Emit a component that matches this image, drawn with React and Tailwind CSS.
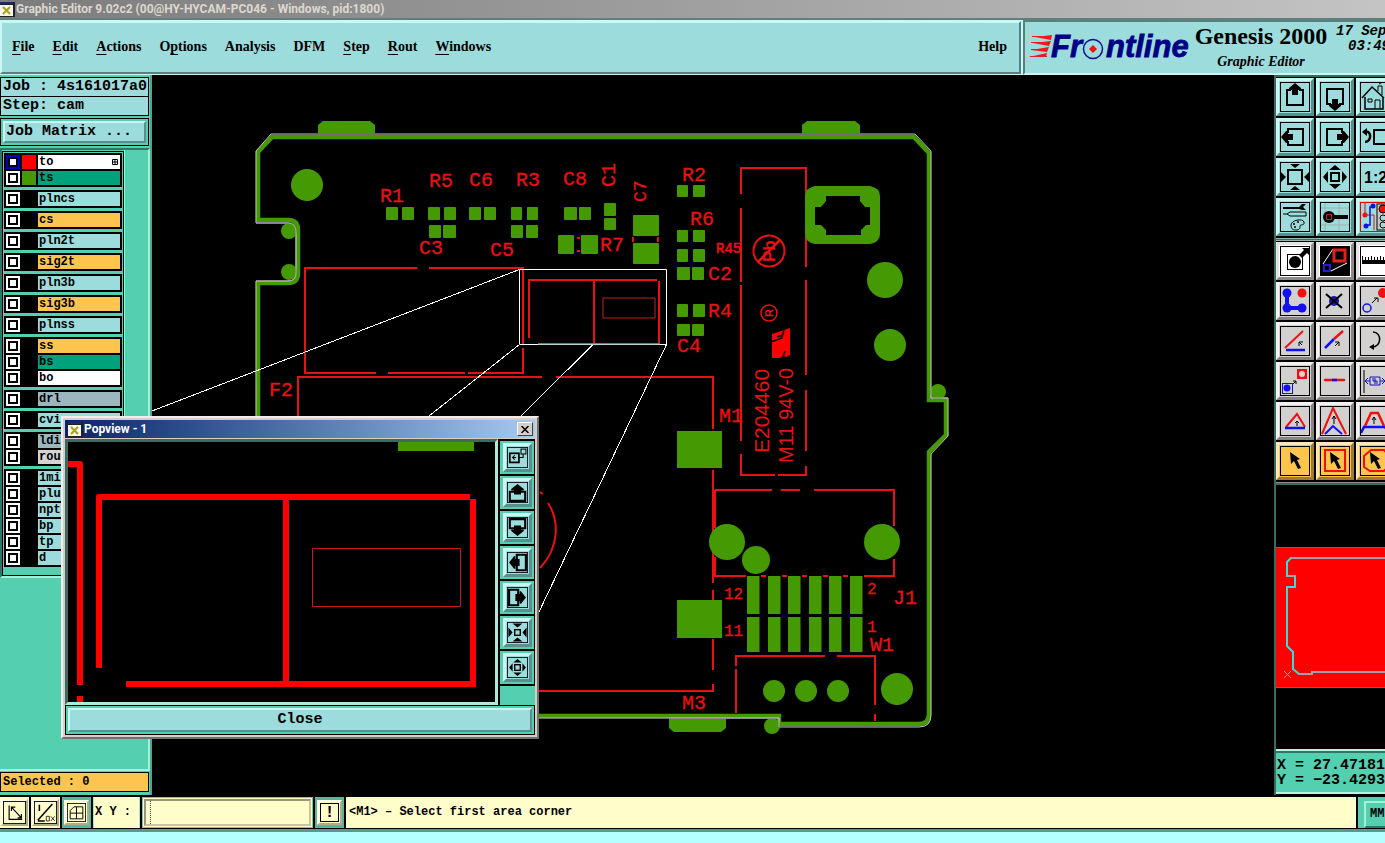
import React from "react";

const MONO = "font-['Liberation_Mono',monospace]";
const SERIF = "font-['Liberation_Serif',serif]";
const SANS = "font-['Roboto',sans-serif]";

const MENU = [
  ["", "F", "ile"],
  ["", "E", "dit"],
  ["", "A", "ctions"],
  ["O", "p", "tions"],
  ["Analysis", "", ""],
  ["DFM", "", ""],
  ["", "S", "tep"],
  ["", "R", "out"],
  ["", "W", "indows"],
];

const CYAN = "bg-[#9cdcdc]";
const ORANGE = "bg-[#fec54e]";
const GREEN = "bg-[#00a27c]";
const SLATE = "bg-[#9cb6be]";
const WHITE = "bg-white";

const LAYERS = [
  [["to", WHITE], ["ts", GREEN]],
  [["plncs", CYAN]],
  [["cs", ORANGE]],
  [["pln2t", CYAN]],
  [["sig2t", ORANGE]],
  [["pln3b", CYAN]],
  [["sig3b", ORANGE]],
  [["plnss", CYAN]],
  [["ss", ORANGE], ["bs", GREEN], ["bo", WHITE]],
  [["drl", SLATE]],
  [["cvi", CYAN]],
  [["ldi", SLATE], ["rou", "bg-[#d6d3d3]"]],
  [["1mi", CYAN], ["plug", CYAN], ["npth", CYAN], ["bp", CYAN], ["tp", CYAN], ["d", CYAN]],
];

/* ---------- window chrome ---------- */

function AppMark() {
  return (
    <svg width="15" height="15" viewBox="0 0 15 15" className="shrink-0">
      <rect width="15" height="15" fill="#202020" />
      <rect x="0" y="3" width="13" height="11" fill="#f4f4f4" />
      <rect x="0" y="0" width="13" height="2" fill="#1a2a70" />
      <path d="M3 5l7 7M10 5l-7 7" stroke="#a8a410" strokeWidth="2" />
    </svg>
  );
}

function FrontlineLogo() {
  return (
    <svg width="164" height="38" viewBox="1028 28 164 38" className="shrink-0" role="img" aria-label="Frontline">
      <g fill="#f01818">
        <path d="M1035 37l17-2-1 5zM1033 43l18-2-2 5zM1031 50l18-3-2 5zM1029 57l18-4-1 4z" />
        <path d="M1032 36h19v1h-19zM1031 42h18v1h-18zM1031 49h17v1h-17zM1030 56h17v1h-17z" />
      </g>
      <g fill="#000084" stroke="#000084" strokeWidth="0.8" fontFamily="Liberation Sans, sans-serif" fontWeight="bold" fontStyle="italic" fontSize="31">
        <text x="1051" y="57">Fr</text>
        <text x="1106" y="57">ntline</text>
      </g>
      <circle cx="1093" cy="49" r="9.5" fill="#9cdcdc" stroke="#101090" strokeWidth="1.5" />
      <path d="M1093 45l4 4-4 4-4-4z" fill="#f01010" />
    </svg>
  );
}

/* ---------- toolbar icons, drawn on a 30 unit grid ---------- */

const outArrow = (
  <>
    <path d="M11 8H7v15h16V8h-4" fill="none" stroke="#000" strokeWidth="2" />
    <path d="M15 1l6 5v2h-3v5h-6V8H9V6z" />
  </>
);

const wideArrow = (
  <>
    <path d="M10 14H4v13h22V14h-6" fill="none" stroke="#000" strokeWidth="3" />
    <path d="M15 3l9 7v2h-4v6H10v-6H6v-2z" />
  </>
);

const turned = (angle, shape = outArrow) => <g transform={`rotate(${angle} 15 15)`}>{shape}</g>;

const ICONS = {
  up: outArrow,
  down: turned(180),
  left: turned(270),
  right: turned(90),
  panUp: wideArrow,
  panDown: turned(180, wideArrow),
  panLeft: turned(270, wideArrow),
  panRight: turned(90, wideArrow),
  home: (
    <g fill="none" stroke="#000">
      <path d="M2 16L12 5l12 11M5 15v12h18V15" strokeWidth="1.5" />
      <path d="M18 9V4h4v9M8 17h4v3H8zM15 27v-9h5v9M19 2l4-2" />
    </g>
  ),
  back: (
    <>
      <rect x="14" y="8" width="16" height="14" fill="none" stroke="#000" strokeWidth="2" />
      <path d="M4 10c8-3 8 10 1 10" fill="none" stroke="#000" strokeWidth="2.5" />
      <path d="M2 10l5-4v8z" />
    </>
  ),
  zoomIn: (
    <>
      <rect x="8" y="8" width="14" height="14" fill="none" stroke="#000" strokeWidth="2" />
      <path d="M10 2h10l-5 4zM10 28h10l-5-4zM1 10v10l5-5zM29 10v10l-5-5z" />
    </>
  ),
  zoomOut: (
    <>
      <rect x="11" y="11" width="8" height="8" fill="none" stroke="#000" strokeWidth="2" />
      <path d="M9 8h12l-6-5zM9 22h12l-6 5zM8 9v12l-5-6zM22 9v12l5-6z" />
    </>
  ),
  ratio: (
    <text x="4" y="21" fontFamily="Liberation Sans, sans-serif" fontWeight="bold" fontSize="16">1:2</text>
  ),
  tools: (
    <>
      <path d="M3 5h16l3-3h4l-3 3 3 3h-4l-3-1H3z" />
      <path d="M3 12h4l3-2h16v4H10l-3-2M11 23c0-5 12-7 13-3s-4 2-4 4 0 4-4 4-5-2-5-5z" fill="none" stroke="#000" />
      <circle cx="14" cy="22" r="1" />
      <circle cx="18" cy="20" r="1" />
      <circle cx="15" cy="25" r="1" />
    </>
  ),
  snap: (
    <>
      <path d="M5 1v28M19 1v28M1 6h28M1 23h28" stroke="#a0b0a8" strokeWidth="1" />
      <circle cx="9" cy="15" r="6" />
      <rect x="14" y="13" width="14" height="4" />
      <path d="M6.500 12.500h5v5h-5z" fill="none" stroke="#c02020" />
    </>
  ),
  net: (
    <>
      <path d="M5 1v12M5 13h9v15" fill="none" stroke="#e01010" />
      <path d="M13 5h-3v18H7" fill="none" stroke="#1010e0" strokeWidth="1.5" />
      <circle cx="13" cy="4" r="2.5" fill="#1010f0" />
      <circle cx="6" cy="24" r="2.5" fill="#1010f0" />
      <circle cx="5" cy="13" r="2.5" fill="#f01010" />
      <rect x="17" y="2" width="12" height="26" fill="#c8c8c8" stroke="#000" />
      <circle cx="23" cy="7" r="4" fill="#f01010" stroke="#000" />
      <circle cx="23" cy="16" r="3" fill="#9cdcdc" stroke="#000" />
      <circle cx="23" cy="23" r="3" fill="#9cdcdc" stroke="#000" />
    </>
  ),
  addPad: (
    <>
      <rect x="7.5" y="8.5" width="15" height="15" fill="none" stroke="#000" />
      <circle cx="15" cy="16" r="6" />
      <path d="M19 9l5-5-2-2h7v7l-2-2-5 5z" />
    </>
  ),
  resize: (
    <>
      <rect x="1" y="1" width="28" height="28" />
      <path d="M3 18L13 3M11 25l16-8" stroke="#fff" />
      <rect x="14" y="4" width="11" height="11" fill="none" stroke="#e02020" strokeWidth="3" />
      <rect x="4" y="19" width="6" height="6" fill="none" stroke="#2020d0" strokeWidth="2" />
    </>
  ),
  ruler: <path d="M2 10h1v4h2v-3h1v3h2v-3h1v3h2v-4h1v4h2v-3h1v3h2v-3h1v3h2v-4h1v4h2v-3h1v3h2v-4h1v8H2z" />,
  link: (
    <>
      <path d="M7 7v15h15" fill="none" stroke="#1010f0" strokeWidth="4" />
      <circle cx="7" cy="7" r="4.5" fill="#1010f0" />
      <circle cx="7" cy="22" r="4.5" fill="#1010f0" />
      <circle cx="22" cy="22" r="4.5" fill="#1010f0" />
      <circle cx="22" cy="7" r="4.5" fill="#f01010" />
    </>
  ),
  remove: (
    <>
      <circle cx="14" cy="15" r="5" fill="#1818b0" />
      <path d="M6 8l16 14M22 8L6 22" stroke="#000" strokeWidth="2" />
    </>
  ),
  move: (
    <>
      <circle cx="7" cy="22" r="4" fill="none" stroke="#1010f0" strokeWidth="1.5" />
      <circle cx="23" cy="7" r="5" fill="#f01010" />
      <path d="M12 17l5-5M14 12h4v4" fill="none" stroke="#000" />
    </>
  ),
  angle: (
    <>
      <path d="M5 22L23 5" stroke="#f01010" strokeWidth="2" />
      <path d="M6 24h19" stroke="#1010f0" strokeWidth="2.5" />
      <path d="M22 19l-3-3m0 4v-4h4" fill="none" stroke="#000" />
    </>
  ),
  extend: (
    <>
      <path d="M5 22l9-9" stroke="#1010f0" strokeWidth="2.5" />
      <path d="M14 13l9-8" stroke="#f01010" strokeWidth="2.5" />
      <path d="M15 20l4-4m-4 0h4v4" fill="none" stroke="#000" />
    </>
  ),
  rotate: (
    <>
      <path d="M13 6c9 0 9 15-1 15" fill="none" stroke="#000" strokeWidth="1.5" />
      <path d="M9 21l5-3v6z" />
    </>
  ),
  copy: (
    <>
      <rect x="17" y="3" width="10" height="10" fill="#f01010" />
      <circle cx="22" cy="8" r="3" fill="#d8d4d4" />
      <rect x="2.5" y="17.500" width="10" height="10" fill="none" stroke="#1010f0" />
      <circle cx="7" cy="22" r="3.500" fill="#1010f0" />
      <path d="M13 18l3-3m-3 0h3v3" fill="none" stroke="#000" />
    </>
  ),
  breakLine: (
    <>
      <path d="M5 14h19" stroke="#f01010" strokeWidth="2.500" strokeLinecap="round" />
      <path d="M12 14h5" stroke="#1010f0" strokeWidth="2.500" />
    </>
  ),
  spacing: (
    <>
      <path d="M4 4v23M26 4v23" stroke="#000" />
      <path d="M5 15h5m10 0h5M8 12l-3 3 3 3M22 12l3 3-3 3M10 11h10v8H10zM13 12v3h4v3M15 12v6" fill="none" stroke="#1010c0" />
    </>
  ),
  triangle: (
    <>
      <path d="M6 21L17 8l8 13" fill="none" stroke="#f01010" strokeWidth="2" />
      <path d="M5 22h20" stroke="#1010f0" strokeWidth="2.500" />
      <path d="M17 20v-5m-2 2l2-2 2 2" fill="none" stroke="#000" />
    </>
  ),
  peak: (
    <>
      <path d="M2 28L13 2l13 26" fill="none" stroke="#f01010" strokeWidth="2" />
      <path d="M5 28l8-8 9 8" fill="none" stroke="#1010f0" strokeWidth="2" />
      <path d="M14 18v-8m-2 3l2-3 2 3" fill="none" stroke="#000" />
    </>
  ),
  trapezoid: (
    <>
      <path d="M5 20l6-13h7l6 13" fill="none" stroke="#f01010" strokeWidth="2.500" />
      <path d="M1 27l3-6h21l4 6" fill="none" stroke="#1010f0" strokeWidth="2.500" />
      <path d="M14 18v-7m-2 3l2-3 2 3" fill="none" stroke="#000" />
    </>
  ),
  select: <path d="M10 6l10 7-3 1 4 8-3 1-4-8-3 3z" />,
  selectBox: (
    <>
      <rect x="5" y="4" width="20" height="21" fill="none" stroke="#f01010" strokeWidth="2" />
      <path d="M10 6l10 7-3 1 4 8-3 1-4-8-3 3z" />
    </>
  ),
  selectPoly: (
    <>
      <path d="M11 4h13l5 6v10l-5 5H10l-6-4V10z" fill="none" stroke="#f01010" strokeWidth="2" />
      <path d="M10 6l10 7-3 1 4 8-3 1-4-8-3 3z" />
    </>
  ),
  popview: (
    <>
      <rect x="4" y="9" width="13" height="13" fill="none" stroke="#000" strokeWidth="2.500" />
      <rect x="20" y="3" width="7" height="7" fill="none" stroke="#000" strokeWidth="1.500" />
      <path d="M17 15h6v-5M13 15H8m3-3l-3 3 3 3" fill="none" stroke="#000" strokeWidth="1.500" />
    </>
  ),
  zoomFit: (
    <>
      <rect x="11" y="11" width="8" height="8" fill="none" stroke="#000" strokeWidth="2" />
      <path d="M8 2h14l-7 6zM8 28h14l-7-6zM2 8v14l6-7zM28 8v14l-6-7z" />
    </>
  ),
  corner: <path d="M8 6v18h17M11 8l13 14M11 13V8h5M24 17v5h-5" fill="none" stroke="#000" strokeWidth="1.500" />,
  slope: (
    <>
      <path d="M5 25L24 4M5 26h9M7 5v8" fill="none" stroke="#000" strokeWidth="2" />
      <path d="M16 20h4v6h-4zM22 20l5 6M27 20l-5 6" fill="none" stroke="#000" />
    </>
  ),
  grid: <path d="M5 12l6-6h14v19H5zM15 6v19M5 16h20" fill="none" stroke="#000" strokeWidth="1.500" />,
};

function Glyph({ name, size, frame = "#000" }) {
  return (
    <svg width={size} height={size} viewBox="0 0 30 30" aria-hidden="true">
      {ICONS[name]}
      <rect x="0.500" y="0.500" width="29" height="29" fill="none" stroke={frame} strokeWidth={30 / size} />
    </svg>
  );
}

const TONES = {
  cyan: "bg-[#9cdcdc] border-t-[#c8f8f4] border-l-[#c8f8f4] border-b-[#58908f] border-r-[#58908f]",
  white: "bg-white border-t-[#e4e2e2] border-l-[#e4e2e2] border-b-[#8c8a8a] border-r-[#8c8a8a]",
  grey: "bg-[#d3d0d0] border-t-[#f2f0f0] border-l-[#f2f0f0] border-b-[#858383] border-r-[#858383]",
  orange: "bg-[#fec54e] border-t-[#ffe8b4] border-l-[#ffe8b4] border-b-[#9c7a34] border-r-[#9c7a34]",
};

function Tool({ name, tone, label, frame }) {
  return (
    <button type="button" aria-label={label || name} className={`flex size-[38px] items-center justify-center border-3 ${TONES[tone]}`}>
      <Glyph name={name} size={30} frame={frame} />
    </button>
  );
}

const VIEW_TOOLS = ["up", "down", "home", "left", "right", "back", "zoomIn", "zoomOut", "ratio", "tools", "snap", "net"];
const EDIT_TOOLS = [
  ["addPad", "white"], ["resize", "white"], ["ruler", "white"],
  ["link", "grey"], ["remove", "grey"], ["move", "grey"],
  ["angle", "grey"], ["extend", "grey"], ["rotate", "grey"],
  ["copy", "grey"], ["breakLine", "grey"], ["spacing", "grey"],
  ["triangle", "grey"], ["peak", "grey"], ["trapezoid", "grey"],
  ["select", "orange"], ["selectBox", "orange"], ["selectPoly", "orange"],
];

/* ---------- board drawing ---------- */

const PADS = [
  [386, 207, 12, 13], [402, 207, 12, 13], [428, 207, 12, 13], [444, 207, 12, 13],
  [469, 207, 12, 13], [484, 207, 12, 13], [511, 207, 11, 13], [527, 207, 11, 13],
  [564, 207, 13, 13], [579, 207, 12, 13], [429, 225, 12, 13], [443, 225, 13, 13],
  [511, 225, 12, 13], [526, 225, 12, 13], [604, 203, 12, 13], [604, 218, 12, 12],
  [558, 235, 16, 19], [581, 235, 17, 19], [633, 215, 26, 21], [633, 243, 26, 21],
  [677, 185, 11, 12], [693, 185, 12, 12], [677, 230, 11, 12], [693, 230, 12, 12],
  [677, 249, 11, 13], [693, 249, 12, 13], [677, 267, 13, 13], [692, 267, 12, 13],
  [677, 304, 11, 13], [693, 304, 12, 13], [677, 324, 13, 12], [692, 324, 12, 12],
];
const BLOCKS = [[677, 431, 45, 37], [677, 600, 45, 38]];
const PIN_X = [747, 768, 788, 809, 829, 850];
const DOTS = [
  [307, 185, 16], [885, 280, 18], [890, 345, 16], [727, 542, 18], [756, 560, 14], [882, 542, 18],
  [897, 689, 16], [774, 691, 11], [806, 691, 11], [838, 691, 11], [289, 231, 8], [289, 272, 8],
  [772, 726, 8], [938, 392, 8],
];
const NAMES = [
  ["R1", 380, 202], ["R5", 429, 187], ["C6", 469, 186], ["R3", 516, 186], ["C8", 563, 185],
  ["C3", 419, 254], ["C5", 490, 256], ["R7", 600, 251], ["F2", 269, 396], ["R2", 682, 181],
  ["R6", 690, 225], ["C2", 708, 280], ["R4", 708, 317], ["C4", 677, 352], ["M1", 719, 422],
  ["J1", 893, 604], ["W1", 870, 651], ["M3", 682, 709],
];
const PIN_NAMES = [["12", 724, 599], ["11", 724, 636], ["2", 867, 594], ["1", 867, 632]];

const EDGE_GREEN =
  "M258 730V283H288Q298 283 298 273V230Q298 220 288 220H258V152L272 137H914L929 153V400H946V435L929 452V714Q929 724 919 724H779V716H258";
const EDGE_LINE =
  "M256 730V281H288Q296 281 296 273V232Q296 223 288 223H256V151L271 134H915L931 151V398H948V436L931 454V715Q931 727 919 727H779V718H258";

function Board() {
  return (
    <svg width="1122" height="720" viewBox="152 75 1122 720" className="block shrink-0" role="img" aria-label="Board layers">
      <path d={EDGE_GREEN} fill="none" stroke="#459a04" strokeWidth="4.500" />
      <path d={EDGE_LINE} fill="none" stroke="#c4bccb" strokeWidth="1" />
      <g fill="#e81212" fontFamily="Liberation Mono, monospace" fontSize="20" stroke="#e81212" strokeWidth="0.300">
        {NAMES.map(([t, x, y]) => <text key={t} x={x} y={y}>{t}</text>)}
        <text transform="translate(615 187) rotate(-90)">C1</text>
        <text transform="translate(646 202) rotate(-90)" fontSize="18">C7</text>
        {PIN_NAMES.map(([t, x, y]) => <text key={t} x={x} y={y} fontSize="16">{t}</text>)}
        <text x="716" y="253" fontSize="14" strokeWidth="0.600">R45</text>
      </g>
      <g fill="#e81212" fontFamily="Liberation Sans, sans-serif">
        <text transform="translate(769 453) rotate(-90)" fontSize="21">E204460</text>
        <text transform="translate(793 463) rotate(-90)" fontSize="20">M11 94V-0</text>
      </g>
      <g fill="none" stroke="#e81212" strokeWidth="2">
        <path d="M305 374V268H417M429 268H523V345M523 348V373H468M465 373H388M376 373H305" />
        <path d="M298 420V377H542M556 377H713V429M713 470V583M713 590V600M713 639V670M713 684V691H530" />
        <path d="M529 338V280H657M594 280V344M659 281V344M538 344H660" />
        <path d="M741 194V168H806V196M806 235V267M806 280V375M806 390V451M806 466V475H778M775 475H741V454M741 441V285M741 282V208" />
        <path d="M715 490H772M781 490H800M814 490H894V526M894 559V576H864M715 490V528M715 557V576H746M761 576h5M782 576h5M802 576h5M823 576h5M843 576h5" />
        <path d="M736 713V669M736 666V656H825M837 656H875V705M875 714V721" />
        <path d="M577 238h3M577 251h3M633 237v5M658 237v5M540 492l3 2M548 503C559 520 560 547 540 568" />
        <path d="M603 298h52v20h-52z" strokeWidth="1" stroke="#c02020" />
      </g>
      <g stroke="#e81212" fill="none">
        <circle cx="769" cy="251" r="15.500" strokeWidth="2" />
        <circle cx="769" cy="313" r="8" strokeWidth="1.500" />
        <path d="M758 262l22-22" strokeWidth="2.500" />
      </g>
      <g fill="#e81212" fontFamily="Liberation Sans, sans-serif" fontWeight="bold">
        <text transform="translate(775 262) rotate(-90)" fontSize="17">Pb</text>
        <text transform="translate(773 317) rotate(-90)" fontSize="11">R</text>
      </g>
      <path d="M772 334l18-6v27l-4 2-2-1-4 2-8 0z" fill="#f00" />
      <path d="M771 342l11-4 2-8M777 337l6-2M783 357l2-6" fill="none" stroke="#000" strokeWidth="1.500" />
      <g fill="#459a04">
        <path d="M318 134v-9l5-4h47l5 4v9zM802 134v-9l5-4h48l5 4v9zM669 719v9l5 4h47l5-4v-9z" />
        {PADS.map(([x, y, w, h]) => <rect key={`${x}-${y}`} x={x} y={y} width={w} height={h} rx="1" />)}
        {BLOCKS.map(([x, y, w, h]) => <rect key={`${x}-${y}`} x={x} y={y} width={w} height={h} />)}
        {PIN_X.map((x) => <path key={x} d={`M${x} 576h12.500v38h-12.500zM${x} 617h12.500v35h-12.500z`} />)}
        {DOTS.map(([x, y, r]) => <circle key={`${x}-${y}`} cx={x} cy={y} r={r} />)}
        <path
          fillRule="evenodd"
          d="M815 186H870Q880 188 880 196V234Q880 242 870 244H815Q805 242 805 234V196Q805 188 815 186ZM826 196V201L821 207H815V225H821L826 230V235H861V230L866 225H870V207H865L860 201V196Z"
        />
      </g>
      <path d="M779 727v-9H669M256 281h32q8 0 8-8v-41q0-9-8-9h-32M931 388v10h17" fill="none" stroke="#b0a4bc" />
      <g fill="none" stroke="#fff">
        <path d="M519.500 269.500h147v75h-147z" />
        <path d="M519.500 269.500L152 411M519.500 344.500L429 416M593 344.500L521 416M666.500 344.500L538 614" shapeRendering="crispEdges" />
      </g>
      <path d="M538 344h122" stroke="#6ca8ac" />
    </svg>
  );
}

function Overview() {
  return (
    <svg width="120" height="265" viewBox="1276 485 120 265" className="block shrink-0" role="img" aria-label="Overview">
      <rect x="1275.500" y="547.500" width="140" height="140" fill="#f00" stroke="#a06010" />
      <path d="M1400 558H1291L1287 562V576H1295V587H1287V646L1293 652V669L1299 674H1312V672H1400" fill="none" stroke="#38dce0" strokeWidth="2" />
      <path d="M1400 558H1291M1299 674h13v-2h90M1287 576h8" stroke="#a8a0a4" strokeWidth="2" fill="none" />
      <path d="M1284 671l7 7M1291 671l-7 7" stroke="#d8a0a0" />
    </svg>
  );
}

/* ---------- panels ---------- */

function LayerRow({ name, tone, active, swatch }) {
  return (
    <li className="flex h-[14px] items-center gap-[2px]">
      <span className={`flex size-[14px] shrink-0 items-center justify-center ${active ? "bg-[#0000c8]" : "bg-white"}`}>
        <input id={`layer-${name}`} type="checkbox" className="size-[10px] appearance-none border-2 border-black bg-white" />
      </span>
      <span className={`h-[14px] w-[14px] shrink-0 ${swatch}`} />
      <label htmlFor={`layer-${name}`} className={`flex h-[14px] flex-1 items-center justify-between px-px text-[12px] leading-[14px] font-bold ${tone}`}>
        {name}
        {active && (
          <svg width="6" height="6" viewBox="0 0 6 6" className="mr-px">
            <path d="M.5.5h5v5h-5zM3 0v6M0 3h6" fill="none" stroke="#000" />
          </svg>
        )}
      </label>
    </li>
  );
}

function Sidebar() {
  return (
    <aside className={`flex w-[152px] shrink-0 flex-col border-r-2 border-[#48a890] bg-[#54cfb0] pt-[2px] ${MONO}`}>
      <div className="mr-px flex flex-col border border-black bg-black text-[15px] leading-[18px] font-bold text-black">
        <div className="h-[18px] bg-[#9cdcdc] pl-[2px] whitespace-pre">Job : 4s161017a0</div>
        <div className="mt-px h-[18px] bg-[#9cdcdc] pl-[2px] whitespace-pre">Step: cam</div>
      </div>
      <div className="mt-[2px] mr-px border border-black bg-[#54cfb0] p-[2px]">
        <button type="button" className="block h-[22px] w-full border-2 border-t-[#c8f8f4] border-r-[#58908f] border-b-[#58908f] border-l-[#c8f8f4] bg-[#9cdcdc] pl-px text-left text-[15px] leading-[18px] font-bold">
          Job Matrix ...
        </button>
      </div>
      <div className="mt-[2px] flex flex-1 flex-col border-t-2 border-r-2 border-b-2 border-t-[#2c7866] border-r-[#a4f0dc] border-b-[#a4f0dc]">
        <div className="w-[125px] border-r border-b-2 border-l-2 border-r-[#a4f0dc] border-b-[#a4f0dc] border-l-[#2c7866] pt-px">
          <div className="border border-black pt-px pb-[8px]">
            <ul className="flex flex-col gap-[3px] pr-px pl-px">
              {LAYERS.map((group, i) => (
                <li key={i}>
                  <ul className="flex flex-col gap-[2px] bg-black p-[2px]">
                    {group.map(([name, tone]) => (
                      <LayerRow
                        key={name}
                        name={name}
                        tone={tone}
                        active={name === "to"}
                        swatch={name === "to" ? "bg-[#f00]" : name === "ts" ? "bg-[#459a04]" : "bg-black"}
                      />
                    ))}
                  </ul>
                </li>
              ))}
            </ul>
          </div>
        </div>
      </div>
      <div className="mt-px mr-px mb-[3px] h-[20px] border border-black bg-[#fec54e] pl-[2px] text-[12px] leading-[18px] font-bold">Selected : 0</div>
    </aside>
  );
}

function ToolPanel() {
  return (
    <aside className="flex w-[111px] shrink-0 flex-col overflow-hidden border-l-2 border-[#3c6a60] bg-black">
      <div className="grid w-[120px] shrink-0 grid-cols-3 gap-y-[2px] border-t-2 border-[#3c6a60] pt-px">
        {VIEW_TOOLS.map((n) => <Tool key={n} name={n} tone="cyan" frame={n === "net" ? "#e00" : undefined} />)}
      </div>
      <div className="mt-[2px] mb-px h-[3px] shrink-0 border-y border-[#8fb8b0] bg-[#3c6a60]" />
      <div className="grid w-[120px] shrink-0 grid-cols-3 gap-y-[2px]">
        {EDIT_TOOLS.map(([n, tone]) => <Tool key={n} name={n} tone={tone} />)}
      </div>
      <div className="mt-[2px] h-[3px] shrink-0 border-t border-[#8a8a8a] bg-[#3c6a60]" />
      <div className="min-h-0 flex-1 overflow-hidden">
        <Overview />
      </div>
      <div className={`mb-px h-[45px] w-[120px] shrink-0 border-t-2 border-b-2 border-[#b8f4e4] bg-[#54cfb0] text-[15px] leading-[15px] font-bold whitespace-pre ${MONO}`}>
        <div className="border-t-2 border-[#2c7866] pt-[5px] pl-px">
          <div>X = 27.47181</div>
          <div>Y = −23.4293</div>
        </div>
      </div>
    </aside>
  );
}

const POP_TOOLS = ["popview", "panUp", "panDown", "panLeft", "panRight", "zoomFit", "zoomOut"];

function Popview() {
  return (
    <section aria-label="Popview - 1" className="absolute top-[416px] left-[61px] flex h-[323px] w-[478px] flex-col border-2 border-t-[#f0eeea] border-r-[#707070] border-b-[#707070] border-l-[#f0eeea] bg-[#d4d0c8] p-[2px]">
      <header className="mb-px flex h-[18px] shrink-0 items-center gap-px bg-linear-to-r from-[#0a246a] to-[#a6caf0] pr-[2px] pl-[3px]">
        <AppMark />
        <h2 className={`flex-1 text-[12px] leading-[18px] font-bold text-white ${SANS}`}>Popview - 1</h2>
        <button type="button" aria-label="Close window" className="flex h-[14px] w-[16px] items-center justify-center border border-t-white border-r-[#404040] border-b-[#404040] border-l-white bg-[#d4d0c8]">
          <svg width="8" height="7" viewBox="0 0 8 7"><path d="M.5 0l7 7M7.500 0l-7 7" stroke="#000" strokeWidth="1.500" /></svg>
        </button>
      </header>
      <div className="flex min-h-0 flex-1 flex-col bg-[#54cfb0]">
        <div className="flex min-h-0 flex-1">
          <div className="min-w-0 flex-1 overflow-hidden border-3 border-t-[#3c6a60] border-r-[#b0e8dc] border-b-[#b0e8dc] border-l-[#3c6a60] bg-black">
            <svg width="429" height="262" viewBox="68 442 429 262" className="block" role="img" aria-label="Magnified area">
              <path d="M398 442h76v9h-76z" fill="#459a04" />
              <g fill="none" stroke="#f00" strokeWidth="6" strokeLinejoin="round">
                <path d="M68 464h12v221M80 696v10" />
                <path d="M99 668V497h371M286 497v186M473 499v185M126 684h350" />
                <path d="M312.500 548.500h148v58h-148z" strokeWidth="1" stroke="#c81818" />
              </g>
            </svg>
          </div>
          <div className="flex w-[37px] shrink-0 flex-col border-t-2 border-l-2 border-black">
            {POP_TOOLS.map((n) => (
              <div key={n} className="flex h-[35px] items-center justify-center border-r border-b-2 border-black bg-[#54cfb0]">
                <button type="button" aria-label={`Popview ${n}`} className={`flex size-[29px] items-center justify-center border-3 ${TONES.cyan}`}>
                  <Glyph name={n} size={21} />
                </button>
              </div>
            ))}
          </div>
        </div>
        <div className="border border-black p-[2px]">
          <button type="button" className={`block h-[24px] w-full border-2 text-[15px] leading-[20px] font-bold ${TONES.cyan} ${MONO}`}>Close</button>
        </div>
      </div>
    </section>
  );
}

function StatusBar() {
  const key = "flex size-[27px] items-center justify-center border-2 border-t-[#fffff0] border-l-[#fffff0] border-b-[#b0ae88] border-r-[#b0ae88] bg-[#fffecb]";
  const raisedKey = "flex size-[25px] items-center justify-center border-2 border-t-[#fffff0] border-r-[#b0ae88] border-b-[#b0ae88] border-l-[#fffff0] bg-[#fffecb]";
  return (
    <footer className={`flex h-[34px] shrink-0 items-stretch gap-[2px] bg-black pt-[2px] pb-px text-[12px] leading-[31px] font-bold ${MONO}`}>
      <div className="flex w-[29px] items-center justify-center bg-[#fffecb]">
        <button type="button" aria-label="Corner" className={key}><Glyph name="corner" size={23} /></button>
      </div>
      <div className="flex w-[29px] items-center justify-center bg-[#fffecb]">
        <button type="button" aria-label="Slope" className={key}><Glyph name="slope" size={23} /></button>
      </div>
      <div className="flex w-[29px] items-center justify-center bg-[#54b89c]">
        <button type="button" aria-label="Grid" className={raisedKey}><Glyph name="grid" size={19} /></button>
      </div>
      <label htmlFor="xy" className="w-[47px] border-x border-[#a4e8dc] bg-[#fffecb] pl-px">X Y :</label>
      <div className="w-[171px] border border-[#7cc4b4] bg-[#fffecb] p-px">
        <input id="xy" type="text" className="block h-full w-full border-2 border-t-[#98967c] border-r-[#c8c69c] border-b-[#c8c69c] border-l-[#98967c] bg-[#fffecb] bg-[linear-gradient(to_bottom,#555_50%,transparent_50%)] bg-[length:1px_2px] bg-[position:4px_0] bg-repeat-y px-[4px] text-[12px] outline-none" />
      </div>
      <div className="flex w-[29px] items-center justify-center bg-[#54b89c]">
        <button type="button" className={raisedKey}>
          <span className="flex size-[19px] items-center justify-center border border-black text-[16px] leading-none">!</span>
        </button>
      </div>
      <output className="min-w-0 flex-1 truncate bg-[#fffecb] pl-[3px]">&lt;M1&gt; – Select first area corner</output>
      <div className="w-[27px] shrink-0 overflow-hidden bg-[#54cfb0] pt-[2px] pl-[6px]">
        <button type="button" className="h-[27px] w-[40px] border-2 border-t-[#a4f0dc] border-r-[#2c7866] border-b-[#2c7866] border-l-[#a4f0dc] bg-[#54cfb0] pl-[4px] text-left text-[12px] leading-[23px] font-bold">MM</button>
      </div>
    </footer>
  );
}

export default function App() {
  return (
    <div className="relative flex h-screen flex-col overflow-hidden bg-black text-black">
      <div className="flex h-[20px] shrink-0 items-center gap-px border-b-2 border-[#5c8080] bg-linear-to-r from-[#7c7c7c] to-[#c4c4c4]">
        <AppMark />
        <h1 className={`text-[12px] leading-[18px] font-bold whitespace-nowrap text-[#dcd8d0] ${SANS}`}>
          Graphic Editor 9.02c2 (00@HY-HYCAM-PC046 - Windows, pid:1800)
        </h1>
      </div>

      <header className={`flex h-[55px] shrink-0 bg-[#c8f8f4] ${SERIF}`}>
        <nav className="my-px mr-[2px] flex min-w-0 flex-1 items-center gap-[18px] border-2 border-t-[#c8f8f4] border-r-[#58807f] border-b-[#58807f] border-l-[#c8f8f4] bg-[#9cdcdc] pr-[12px] pb-[2px] pl-[10px] text-[14px] font-bold">
          {MENU.map(([a, u, b]) => (
            <button key={a + u + b} type="button">
              {a}
              <span className="underline decoration-1 underline-offset-[3px]">{u}</span>
              {b}
            </button>
          ))}
          <button type="button" className="ml-auto">Help</button>
        </nav>
        <div className="flex w-[362px] shrink-0 items-start overflow-hidden border-t-2 border-b-2 border-l-2 border-t-[#58807f] border-b-[#c8f8f4] border-l-[#58807f] bg-[#9cdcdc] pl-[3px]">
          <div className="pt-[6px]"><FrontlineLogo /></div>
          <div className="w-[138px] shrink-0 text-center whitespace-nowrap">
            <div className="text-[24px] leading-[28px] font-bold">Genesis 2000</div>
            <div className="pt-[3px] text-[14px] leading-[18px] font-bold italic">Graphic Editor</div>
          </div>
          <div className={`shrink-0 pt-[2px] pl-[6px] text-[14px] leading-[15px] font-bold whitespace-pre italic ${MONO}`}>
            <div>17 Sep</div>
            <div className="pl-[12px]">03:49</div>
          </div>
        </div>
      </header>

      <div className="flex min-h-0 flex-1">
        <Sidebar />
        <main className="min-w-0 flex-1 overflow-hidden bg-black">
          <Board />
        </main>
        <ToolPanel />
      </div>

      <StatusBar />
      <div className="h-[14px] shrink-0 border-t-3 border-[#5c9890] bg-[#b4ffff]" />
      <Popview />
    </div>
  );
}
